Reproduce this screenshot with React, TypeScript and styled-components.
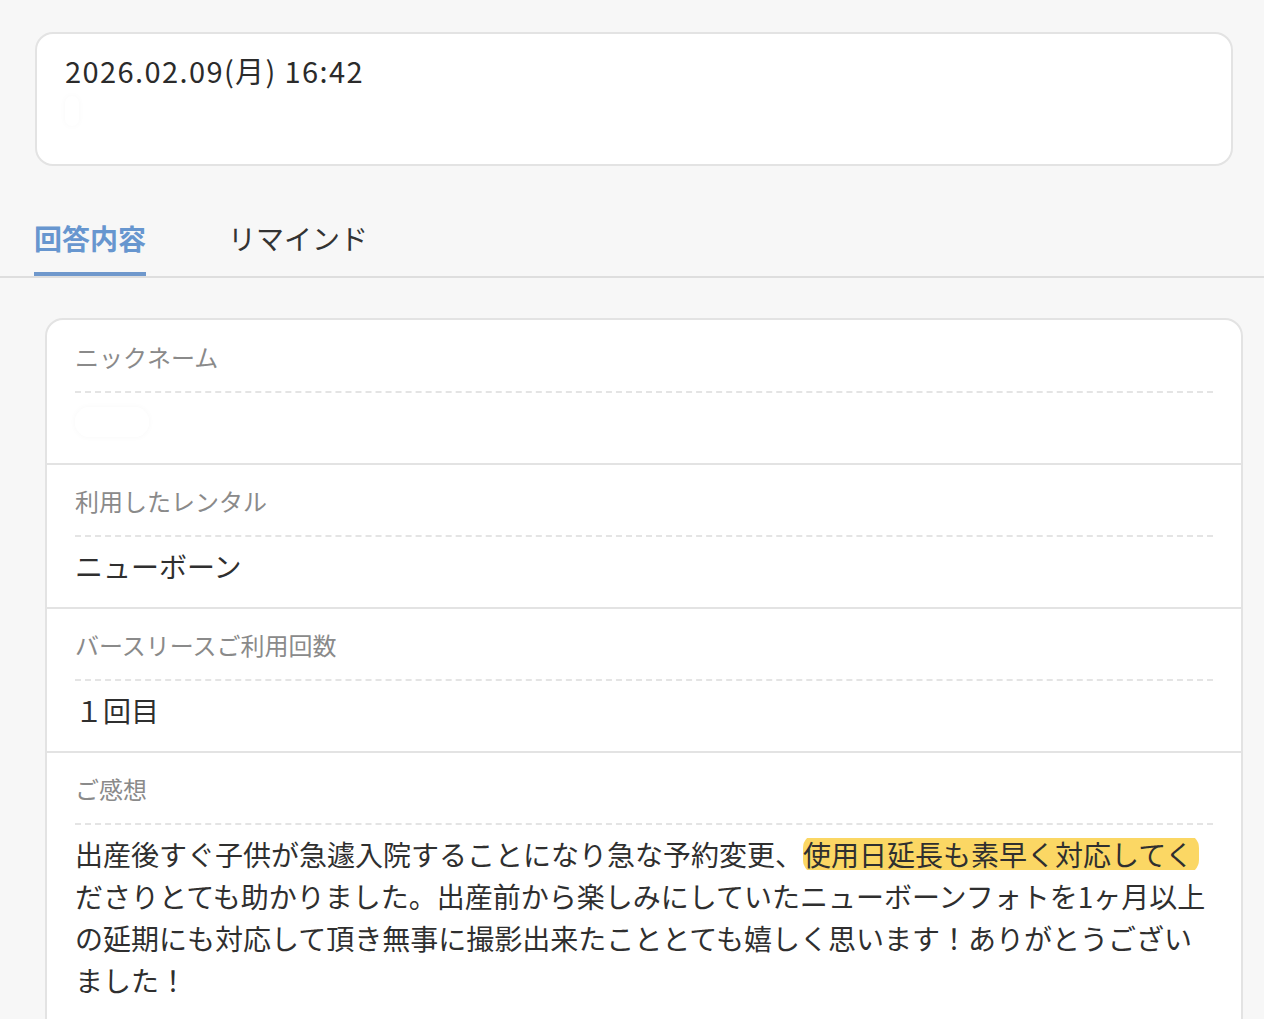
import "react";
import styled, { createGlobalStyle } from "styled-components";

const GlobalStyle = createGlobalStyle`
  html, body {
    margin: 0;
    padding: 0;
    background: #f7f7f7;
    overflow: hidden;
  }
  body {
    font-family: "Noto Sans CJK JP", "Noto Sans", sans-serif;
    color: #333;
  }
`

const Page = styled.div`
  height: 1019px;
  overflow: hidden;
  padding-top: 32px;
  box-sizing: border-box;
`

const DateCard = styled.div`
  margin: 0 31px 0 35px;
  height: 134px;
  box-sizing: border-box;
  background: #fff;
  border: 2px solid #e3e3e3;
  border-radius: 18px;
  padding: 16px 28px;

  p {
    margin: 0;
    font-size: 29px;
    line-height: 40px;
    letter-spacing: 1.4px;
    color: #2b2b2b;
  }
`

const Blur = styled.div<{ $w: number }>`
  width: ${(p) => p.$w}px;
  height: 30px;
  margin-top: 6px;
  border-radius: 14px;
  background: #fff;
  box-shadow: 0 0 6px rgba(0, 0, 0, 0.03);
`

const Tabs = styled.div`
  display: flex;
  gap: 82px;
  margin-top: 34px;
  padding-left: 34px;
  border-bottom: 2px solid #dedede;
`

const Tab = styled.div<{ $active?: boolean }>`
  font-size: 28px;
  line-height: 40px;
  padding: 18px 0;
  color: ${(p) => (p.$active ? "#6796cf" : "#333")};
  font-weight: ${(p) => (p.$active ? 700 : 400)};
  box-shadow: ${(p) => (p.$active ? "inset 0 -4px 0 #6f98cc" : "none")};
`

const AnswerCard = styled.div`
  margin: 40px 21px 0 45px;
  background: #fff;
  border: 2px solid #e3e3e3;
  border-radius: 18px;
`

const Section = styled.div<{ $last?: boolean }>`
  padding: 19px 28px ${(p) => (p.$last ? "60px" : "20px")} 28px;
  & + & {
    border-top: 2px solid #e3e3e3;
  }
  &:first-child {
    padding-top: 20px;
  }
`

const Label = styled.div`
  font-size: 24px;
  line-height: 34px;
  color: #8a8a8a;
  padding-bottom: 17px;
  border-bottom: 2px dashed #e4e4e4;
`

const Value = styled.div`
  font-size: 28px;
  line-height: 42px;
  padding-top: 8px;
  margin-right: -14px;
  color: #2f2f2f;
  min-height: 42px;
`

const Marker = styled.span`
  background-image: linear-gradient(
    transparent 10%,
    #fbd764 10%,
    #fbd764 90%,
    transparent 90%
  );
  border-radius: 14px;
  padding-right: 6px;
  margin-right: -6px;
`

function App() {
  return (
    <Page>
      <GlobalStyle />
      <DateCard>
        <p>2026.02.09(月) 16:42</p>
        <Blur $w={14} />
      </DateCard>

      <Tabs>
        <Tab $active>回答内容</Tab>
        <Tab>リマインド</Tab>
      </Tabs>

      <AnswerCard>
        <Section>
          <Label>ニックネーム</Label>
          <Value>
            <Blur $w={74} />
          </Value>
        </Section>
        <Section>
          <Label>利用したレンタル</Label>
          <Value>ニューボーン</Value>
        </Section>
        <Section>
          <Label>バースリースご利用回数</Label>
          <Value>１回目</Value>
        </Section>
        <Section $last>
          <Label>ご感想</Label>
          <Value>
            出産後すぐ子供が急遽入院することになり急な予約変更、<Marker>使用日延長も素早く対応してく</Marker>
            <br />
            ださりとても助かりました。出産前から楽しみにしていたニューボーンフォトを1ヶ月以上
            <br />
            の延期にも対応して頂き無事に撮影出来たこととても嬉しく思います！ありがとうござい
            <br />
            ました！
          </Value>
        </Section>
      </AnswerCard>
    </Page>
  );
}

export default App;
